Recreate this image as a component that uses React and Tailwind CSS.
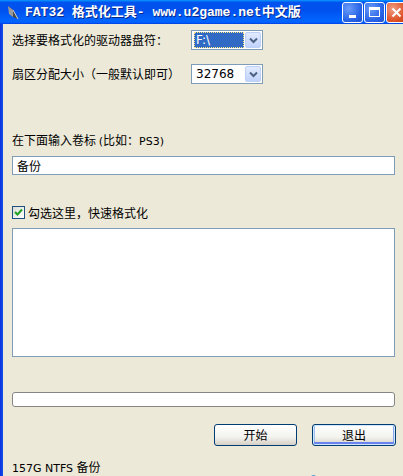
import React from "react";

const cjk = { fontFamily: '"Noto Sans CJK SC", "Liberation Sans", sans-serif' };

function Select({ value, selected }) {
  return (
    <div className="flex h-[20px] w-[72px] items-stretch border border-[#7f9db9] bg-white p-[1px]">
      <div className="flex flex-1 items-center pl-[1px]">
        {selected ? (
          <div className="flex h-full w-full items-center border border-dotted border-[#ffe680] bg-[#316ac5] pl-[1px] text-[12px] leading-none text-white" style={{ fontFamily: '"DejaVu Sans", sans-serif' }}>
            {value}
          </div>
        ) : (
          <div className="pl-[2px] text-[12px] leading-none text-black" style={{ fontFamily: '"DejaVu Sans", sans-serif' }}>
            {value}
          </div>
        )}
      </div>
      <div className="ml-[1px] flex w-[16px] items-center justify-center rounded-[2px] border border-[#bdd0f8] bg-[linear-gradient(to_bottom,#e1eafe,#c1d3fb)]">
        <svg width="9" height="7" viewBox="0 0 9 7">
          <path d="M1 1.5 L4.5 5 L8 1.5" fill="none" stroke="#4d6185" strokeWidth="2" />
        </svg>
      </div>
    </div>
  );
}

function TitleButton({ kind }) {
  if (kind === "close") {
    return (
      <div className="flex h-[21px] w-[21px] shrink-0 items-center justify-center rounded-[3px] border border-white bg-[radial-gradient(circle_at_30%_30%,#f09d82,#e0562c_60%,#c23a14)]">
        <svg width="11" height="11" viewBox="0 0 11 11">
          <path d="M1.5 1.5 L9.5 9.5 M9.5 1.5 L1.5 9.5" stroke="white" strokeWidth="2" />
        </svg>
      </div>
    );
  }
  return (
    <div className="flex h-[21px] w-[21px] shrink-0 items-center justify-center rounded-[3px] border border-white bg-[radial-gradient(circle_at_30%_30%,#6a9cf8,#2a66e8_60%,#1c4fd0)]">
      {kind === "min" ? (
        <div className="mt-[8px] h-[3px] w-[7px] bg-white" />
      ) : (
        <div className="h-[10px] w-[11px] border border-t-[3px] border-white" />
      )}
    </div>
  );
}

export default function App() {
  return (
    <div className="flex h-[476px] w-[403px] flex-col overflow-hidden bg-[#ece9d8]">
      {/* Title bar */}
      <div className="flex h-[24px] shrink-0 items-center overflow-hidden bg-[linear-gradient(to_bottom,#0997ff_0%,#0053ee_10%,#0050ee_40%,#0066ff_88%,#005bff_95%,#003dd7_100%)] pl-[7px]">
        <svg width="12" height="15" viewBox="0 0 12 15" className="shrink-0">
          <path d="M1 1 L6 5 L11 14 L6 12 Z" fill="#4a4a4a" />
          <path d="M1 1 L6 5 L6 12 L2 9 Z" fill="#9a9a9a" />
          <path d="M6 5 L11 14" stroke="#d0d0d0" strokeWidth="1" />
        </svg>
        <div
          className="ml-[6px] whitespace-nowrap text-[13px] font-bold leading-none text-white [text-shadow:1px_1px_0_#0a2a8a]"
          style={{ fontFamily: '"Liberation Mono", "Noto Sans CJK SC", monospace' }}
        >
          FAT32 格式化工具- www.u2game.net中文版
        </div>
        <div className="ml-auto mr-[-4px] flex items-center gap-[1px]">
          <TitleButton kind="min" />
          <TitleButton kind="max" />
          <TitleButton kind="close" />
        </div>
      </div>

      <div className="flex flex-1">
        <div className="w-[3px] shrink-0 bg-[linear-gradient(to_right,#0831d9,#1650f0)]" />
        <div className="flex flex-1 flex-col pl-[9px] pr-[8px] pt-[6px] text-black" style={cjk}>
          <div className="flex items-center">
            <div className="w-[179px] text-[12px] leading-none">选择要格式化的驱动器盘符：</div>
            <Select value="F:\" selected />
          </div>
          <div className="mt-[14px] flex items-center">
            <div className="w-[179px] text-[12px] leading-none">扇区分配大小（一般默认即可）</div>
            <Select value="32768" />
          </div>

          <div className="mt-[48px] h-[16px] text-[12px] leading-[16px]">
            在下面输入卷标 <span style={{ fontFamily: '"DejaVu Sans", "Noto Sans CJK SC", sans-serif' }} className="text-[11px]">(</span>比如：<span style={{ fontFamily: '"DejaVu Sans", sans-serif' }} className="text-[11px]">PS3)</span>
          </div>

          <div className="mt-[8px] flex h-[19px] items-center border border-[#7f9db9] bg-white pl-[4px] text-[12px] leading-none">
            备份
          </div>

          <div className="mt-[31px] flex items-center">
            <div className="flex h-[13px] w-[13px] items-center justify-center border border-[#1c5180] bg-[linear-gradient(135deg,#dcdcd7,#ffffff)]">
              <svg width="9" height="9" viewBox="0 0 9 9">
                <path d="M1 4 L3.5 6.5 L8 1.5" fill="none" stroke="#21a121" strokeWidth="2" />
              </svg>
            </div>
            <div className="ml-[3px] text-[12px] leading-none">勾选这里，快速格式化</div>
          </div>

          <div className="mt-[9px] h-[129px] border border-[#7f9db9] bg-white" />

          <div className="mt-[35px] h-[15px] rounded-[3px] border border-[#868686] bg-white" />

          <div className="mt-[17px] flex justify-end gap-[15px] pr-[-1px]">
            <div className="flex h-[22px] w-[83px] items-center justify-center rounded-[3px] border border-[#003c74] bg-[linear-gradient(to_bottom,#ffffff,#f3f3ef_60%,#d6d0c5)] text-[12px] leading-none">
              开始
            </div>
            <div className="mr-[-1px] flex h-[22px] w-[84px] items-center justify-center rounded-[3px] border border-[#003c74] bg-[linear-gradient(to_bottom,#ffffff,#f3f3ef_60%,#d6d0c5)] text-[12px] leading-none shadow-[inset_0_0_0_1px_#cee7ff,inset_0_-2px_0_1px_#6982ee,inset_2px_0_0_0_#a0c0f0,inset_-2px_0_0_0_#8aa8e8]">
              退出
            </div>
          </div>

          <div className="mt-[13px] flex items-end justify-between">
            <div className="text-[11px] leading-[16px]" style={{ fontFamily: '"DejaVu Sans", "Noto Sans CJK SC", sans-serif' }}>
              157G NTFS <span className="text-[12px]" style={cjk}>备份</span>
            </div>
          </div>
          <div className="relative h-0">
            <div className="absolute left-[259px] top-[0px] h-[3px] w-[4px] rounded-t-full bg-[#a8c870]" />
            <div className="absolute left-[299px] top-[-2px] h-[5px] w-[5px] rounded-t-full bg-[#4aa0d8]" />
          </div>
        </div>
      </div>
    </div>
  );
}
